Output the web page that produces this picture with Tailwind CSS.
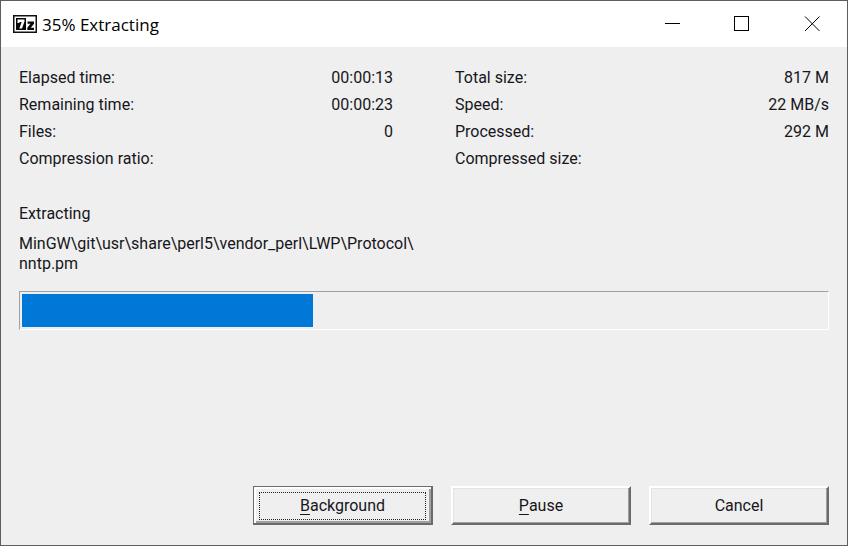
<!DOCTYPE html>
<html lang="en">
<head>
<meta charset="utf-8">
<meta name="viewport" content="width=device-width, initial-scale=1">
<title>35% Extracting</title>
<script src="https://cdn.jsdelivr.net/npm/@tailwindcss/browser@4"></script>
</head>
<body>
<main class="flex min-h-screen flex-col border border-[#5f5d61] bg-[#efefef] font-[Roboto,'Liberation_Sans',sans-serif] text-base leading-5 text-[#161620]">
  <header class="flex h-[46px] items-center bg-white pl-3">
    <svg class="h-[18px] w-6 shrink-0" viewBox="0 0 24 18" aria-hidden="true">
      <rect width="24" height="18" fill="#111"/>
      <rect x="1.5" y="1.5" width="21" height="15" fill="#fff"/>
      <rect x="3" y="3" width="10" height="12" fill="#080808"/>
      <path d="M4.5 4.5H11.5V6.5L9 13.5H6.3L8.7 7H6.5V8H4.5Z" fill="#fff"/>
      <path d="M14.5 6.5H21V8.7L17.8 12.7H21V15H14.3V12.7L17.4 8.8H14.5Z" fill="#080808"/>
    </svg>
    <h1 class="ml-[5px] flex-1 pt-px font-['Open_Sans','Noto_Sans',sans-serif] text-[17px] leading-6 font-normal text-black">35% Extracting</h1>
    <div class="flex h-full">
      <button type="button" aria-label="Minimize" class="flex w-[70px] items-center justify-center"><svg class="size-4" viewBox="0 0 16 16" shape-rendering="crispEdges"><path d="M1 7.5H16" stroke="#000" fill="none"/></svg></button>
      <button type="button" aria-label="Maximize" class="flex w-[70px] items-center justify-center"><svg class="size-4" viewBox="0 0 16 16" shape-rendering="crispEdges"><path d="M.5 .5H14.5V14.5H.5Z" stroke="#000" fill="none"/></svg></button>
      <button type="button" aria-label="Close" class="flex w-[70px] items-center justify-center"><svg class="size-4" viewBox="0 0 16 16"><path d="M1 .5L15.5 15M15.5 .5L1 15" stroke="#000" fill="none"/></svg></button>
    </div>
  </header>

  <div class="flex flex-1 flex-col px-[18px] pt-[17px] pb-5">
    <div class="grid grid-cols-2 gap-x-[62px] leading-[27px]">
      <dl>
        <div class="flex h-[27px] justify-between"><dt>Elapsed time:</dt><dd>00:00:13</dd></div>
        <div class="flex h-[27px] justify-between"><dt>Remaining time:</dt><dd>00:00:23</dd></div>
        <div class="flex h-[27px] justify-between"><dt>Files:</dt><dd>0</dd></div>
        <div class="flex h-[27px] justify-between"><dt>Compression ratio:</dt><dd></dd></div>
      </dl>
      <dl>
        <div class="flex h-[27px] justify-between"><dt>Total size:</dt><dd>817 M</dd></div>
        <div class="flex h-[27px] justify-between"><dt>Speed:</dt><dd>22 MB/s</dd></div>
        <div class="flex h-[27px] justify-between"><dt>Processed:</dt><dd>292 M</dd></div>
        <div class="flex h-[27px] justify-between"><dt>Compressed size:</dt><dd></dd></div>
      </dl>
    </div>

    <label for="progress" class="mt-8">Extracting</label>
    <p class="mt-[10px]">MinGW\git\usr\share\perl5\vendor_perl\LWP\Protocol\<br>nntp.pm</p>
    <progress id="progress" max="817" value="296" class="mt-[17px] block h-[39px] w-full appearance-none border border-t-[#a0a0a0] border-r-white border-b-white border-l-[#a0a0a0] bg-[#efefef] p-[2px] [&::-webkit-progress-bar]:bg-[#efefef] [&::-webkit-progress-value]:bg-[#0078d7]"></progress>

    <div class="mt-auto flex justify-end gap-[18px]">
      <button type="button" class="h-[39px] w-[180px] border border-r-2 border-b-2 border-[#6b6b6b] bg-[#efefef] p-px shadow-[inset_2px_2px_#fff,inset_-2px_-2px_#a0a0a0]"><span class="m-1 flex h-7 items-center justify-center border border-dotted border-[#222]"><span><u class="underline-offset-3">B</u>ackground</span></span></button>
      <button type="button" class="h-[39px] w-[180px] border-2 border-t-white border-r-[#6b6b6b] border-b-[#6b6b6b] border-l-white bg-[#efefef] shadow-[inset_-1px_-1px_#a0a0a0,inset_1px_1px_#e3e3e3]"><u class="underline-offset-3">P</u>ause</button>
      <button type="button" class="h-[39px] w-[180px] border-2 border-t-white border-r-[#6b6b6b] border-b-[#6b6b6b] border-l-white bg-[#efefef] shadow-[inset_-1px_-1px_#a0a0a0,inset_1px_1px_#e3e3e3]">Cancel</button>
    </div>
  </div>
</main>
</body>
</html>
